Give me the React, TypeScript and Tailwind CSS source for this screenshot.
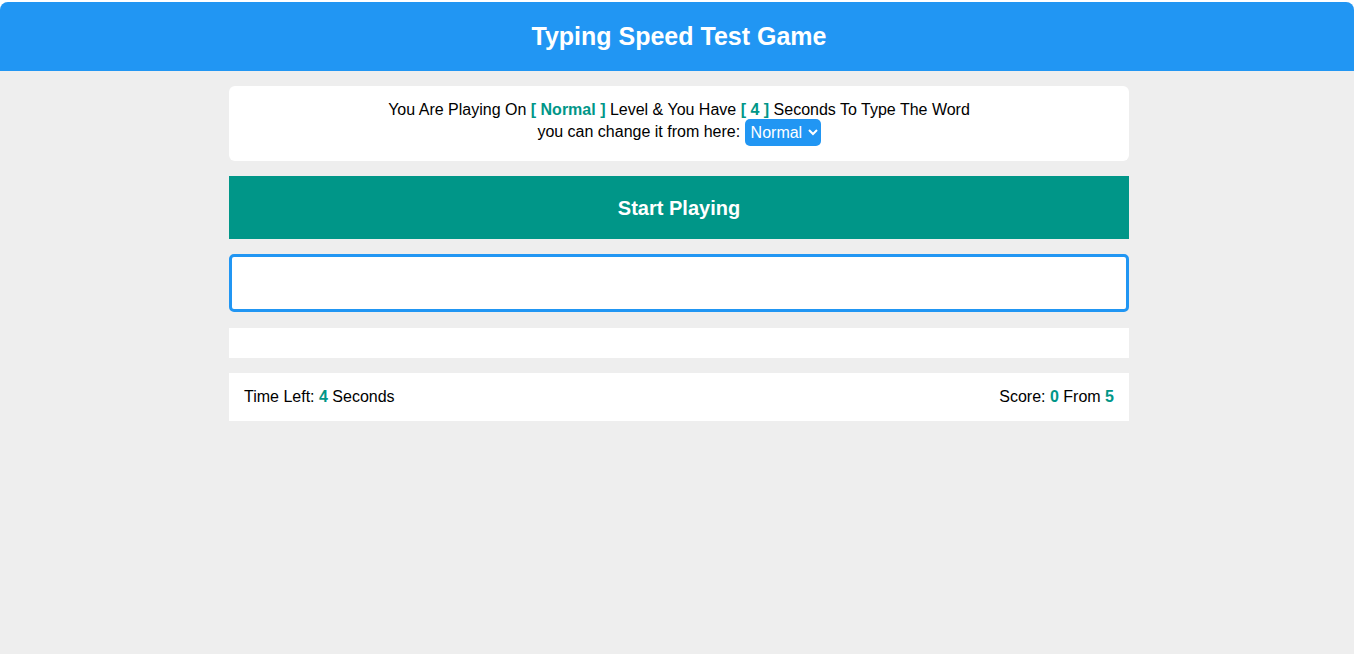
export default function App() {
  return (
    <div className="bg-white pt-[2px] font-['Liberation_Sans',Arial,sans-serif]">
      <div className="h-[652px] rounded-t-[8px] overflow-hidden bg-[#eeeeee]">
        <header className="h-[69px] bg-[#2196f3] flex items-center justify-center pl-[4px]">
          <h1 className="text-white text-[25px] font-bold">Typing Speed Test Game</h1>
        </header>

        <main className="pl-[4px]">
          <div className="w-[900px] mx-auto pt-[15px] flex flex-col gap-[15px]">
            <div className="h-[75px] overflow-hidden bg-white rounded-[6px] pt-[15px] px-[15px] text-center text-[16px] text-black">
              <div className="leading-[18px]">
                You Are Playing On <span className="font-bold text-[#009688]">[ Normal ]</span> Level &amp; You Have{" "}
                <span className="font-bold text-[#009688]">[ 4 ]</span> Seconds To Type The Word
              </div>
              <div className="leading-[26px]">
                you can change it from here:{" "}
                <select
                  defaultValue="Normal"
                  className="bg-[#2196f3] text-white text-[16px] rounded-[5px] h-[27px] px-[2px] outline-none align-middle"
                >
                  <option>Easy</option>
                  <option>Normal</option>
                  <option>Hard</option>
                </select>
              </div>
            </div>

            <button className="h-[63px] bg-[#009688] text-white text-[20px] font-bold">Start Playing</button>

            <input
              type="text"
              className="h-[58px] bg-white border-[3px] border-[#2196f3] rounded-[5px] px-3 text-[16px] outline-none"
            />

            <div className="h-[30px] bg-white mt-[1px]" />

            <div className="h-[48px] bg-white px-[15px] flex items-center justify-between text-[16px] text-black">
              <span>
                Time Left: <span className="font-bold text-[#009688]">4</span> Seconds
              </span>
              <span>
                Score: <span className="font-bold text-[#009688]">0</span> From{" "}
                <span className="font-bold text-[#009688]">5</span>
              </span>
            </div>
          </div>
        </main>
      </div>
    </div>
  );
}
